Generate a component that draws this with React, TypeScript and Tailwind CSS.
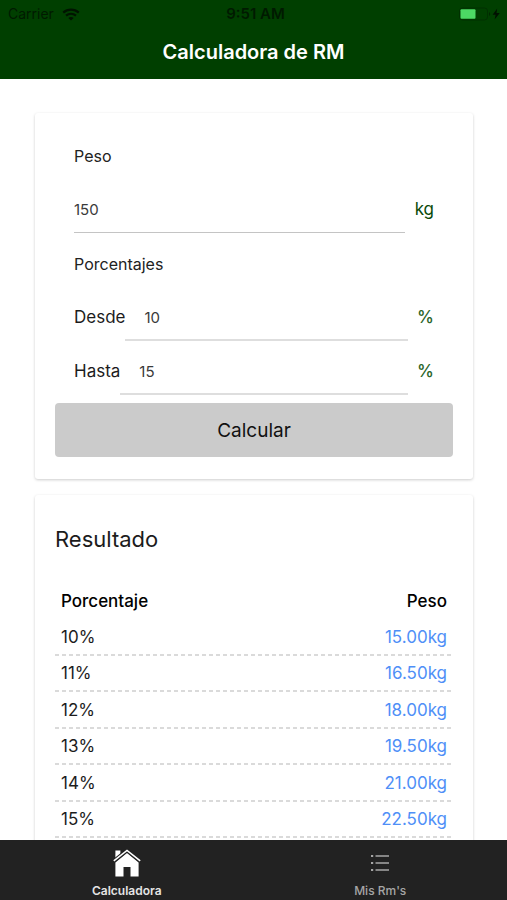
import { useState } from "react";

type Row = { percent: number; weight: string };

const rows: Row[] = [10, 11, 12, 13, 14, 15].map((percent) => ({
  percent,
  weight: ((150 * percent) / 100).toFixed(2),
}));

function WifiIcon() {
  return (
    <svg viewBox="0 0 18 13" className="h-[13px] w-[18px]" fill="none" stroke="#001400" strokeWidth="2.2" aria-hidden="true">
      <path d="M1.2 4.6C5.6.6 12.4.6 16.8 4.6" />
      <path d="M4 7.7c2.9-2.5 7.1-2.5 10 0" />
      <path d="M9 12.4 6.3 9.9c1.6-1.3 3.8-1.3 5.4 0z" fill="#001400" stroke="none" />
    </svg>
  );
}

function BatteryIcon() {
  return (
    <svg viewBox="0 0 44 14" className="h-[14px] w-[44px]" aria-hidden="true">
      <rect x="0.5" y="1" width="28" height="12" rx="3" fill="none" stroke="#003000" />
      <rect x="1.500" y="2.200" width="15" height="9.600" rx="1" fill="#4cd964" />
      <path d="M30 5v4c1.6-.5 1.6-3.5 0-4z" fill="#002800" />
      <path d="M38.200 1.500 33.600 7.800h3L35.600 12.500l5.200-6.600h-3.300z" fill="#001000" />
    </svg>
  );
}

function HomeIcon() {
  return (
    <svg viewBox="0 0 28 28" className="h-7 w-7" aria-hidden="true">
      <path d="M2.400 1.500h5v4L2.400 9.500z" fill="#fff" />
      <path d="M14 4 2.400 13.500V27.500h8.100V18h7v9.500h8.100V13.500z" fill="#fff" />
      <path d="M.8 11.900 14 1.400l13.200 10.500" fill="none" stroke="#222" strokeWidth="3.600" />
      <path d="M.8 11.900 14 1.400l13.200 10.500" fill="none" stroke="#fff" strokeWidth="1.600" />
    </svg>
  );
}

function ListIcon() {
  return (
    <svg viewBox="0 0 20 18" className="h-[18px] w-5" fill="#a6a6a6" aria-hidden="true">
      <path d="M5.500 1.200H19v1.600H5.500zM5.500 8.200H19v1.600H5.500zM5.500 15.200H19v1.600H5.500z" />
      <path d="M1 .9h2.200v2.200H1zM1 7.900h2.200v2.200H1zM1 14.900h2.200v2.200H1z" />
    </svg>
  );
}

export default function App() {
  const [weight, setWeight] = useState("150");
  const [from, setFrom] = useState("10");
  const [to, setTo] = useState("15");

  return (
    <div className="flex h-screen flex-col bg-white font-['Inter','Liberation_Sans',sans-serif] text-[#1c1c1c]">
      <header className="shrink-0 bg-[#003f00]">
        <div className="grid h-7 grid-cols-3 items-center pl-2 pr-1 text-[#001a00]">
          <div className="flex items-center gap-2 text-sm">
            <span>Carrier</span>
            <WifiIcon />
          </div>
          <span className="text-center text-[15px] font-semibold">9:51 AM</span>
          <div className="flex justify-end">
            <BatteryIcon />
          </div>
        </div>
        <h1 className="pt-3 pb-[15px] text-center text-xl leading-6 font-semibold text-white">Calculadora de RM</h1>
      </header>

      <main className="flex min-h-0 flex-1 flex-col gap-4 overflow-hidden pl-[35px] pr-[34px] pt-[34px]">
        <section className="shrink-0 rounded-[3px] px-5 pt-4 pb-[22px] shadow-[0_1px_3px_rgba(0,0,0,0.2)]">
          <form onSubmit={(event) => event.preventDefault()}>
            <div className="px-[19px]">
              <label htmlFor="weight" className="flex h-[54px] items-center text-[16px] text-[#222]">
                Peso
              </label>
              <div className="flex h-[54px] items-center">
                <input
                  id="weight"
                  inputMode="decimal"
                  value={weight}
                  onChange={(event) => setWeight(event.target.value)}
                  className="h-[46px] min-w-0 flex-1 border-b border-[#c4c4c4] text-[15px] text-[#3a3a3a] outline-none"
                />
                <span className="pl-[10px] text-[17px] text-[#0a4a0a]">kg</span>
              </div>
              <h2 className="flex h-[54px] items-center text-[16px] text-[#222]">Porcentajes</h2>
              <div className="flex h-[54px] items-center">
                <label htmlFor="from" className="text-[17px]">Desde</label>
                <input
                  id="from"
                  inputMode="decimal"
                  value={from}
                  onChange={(event) => setFrom(event.target.value)}
                  className="h-[46px] min-w-0 flex-1 border-b-2 border-[#dedede] pl-[19px] text-[15px] text-[#3a3a3a] outline-none"
                />
                <span className="pl-[9px] text-[17px] font-medium text-[#2a652a]">%</span>
              </div>
              <div className="flex h-[54px] items-center">
                <label htmlFor="to" className="text-[17px]">Hasta</label>
                <input
                  id="to"
                  inputMode="decimal"
                  value={to}
                  onChange={(event) => setTo(event.target.value)}
                  className="h-[46px] min-w-0 flex-1 border-b-2 border-[#dedede] pl-[19px] text-[15px] text-[#3a3a3a] outline-none"
                />
                <span className="pl-[9px] text-[17px] font-medium text-[#2a652a]">%</span>
              </div>
            </div>
            <button type="submit" className="mt-1 h-[54px] w-full rounded-[4px] bg-[#cbcbcb] pt-[2px] text-[19px] text-[#111]">
              Calcular
            </button>
          </form>
        </section>

        <section className="shrink-0 rounded-[3px] px-5 pt-7 pb-5 shadow-[0_1px_3px_rgba(0,0,0,0.2)]">
          <h2 className="text-[22px] leading-8">Resultado</h2>
          <table className="mt-7 w-full border-separate border-spacing-0 text-[17px] leading-6">
            <thead>
              <tr className="h-[36px] text-black">
                <th scope="col" className="px-[6px] py-0 text-left font-medium">Porcentaje</th>
                <th scope="col" className="px-[6px] py-0 text-right font-medium">Peso</th>
              </tr>
            </thead>
            <tbody>
              {rows.map((row) => (
                <tr
                  key={row.percent}
                  className="bg-[repeating-linear-gradient(90deg,#dadada_0px,#dadada_4px,transparent_4px,transparent_7px)] bg-[length:100%_2px] bg-bottom bg-no-repeat odd:h-[37px] even:h-[36px]"
                >
                  <td className="px-[6px] pt-0 pb-[2px]">{row.percent}%</td>
                  <td className="px-[6px] pt-0 pb-[2px] text-right text-[#4f8ff7]">{row.weight}kg</td>
                </tr>
              ))}
            </tbody>
          </table>
        </section>
      </main>

      <nav className="grid h-[60px] shrink-0 grid-cols-2 bg-[#222] text-xs">
        <a href="#calculadora" aria-current="page" className="flex flex-col items-center justify-end pb-[1px] font-semibold text-[#e4e4e4]">
          <HomeIcon />
          <span className="mt-[6px] leading-4">Calculadora</span>
        </a>
        <a href="#mis-rms" className="flex flex-col items-center justify-end pb-[1px] font-medium text-[#a6a6a6]">
          <ListIcon />
          <span className="mt-[11px] leading-4">Mis Rm's</span>
        </a>
      </nav>
    </div>
  );
}
